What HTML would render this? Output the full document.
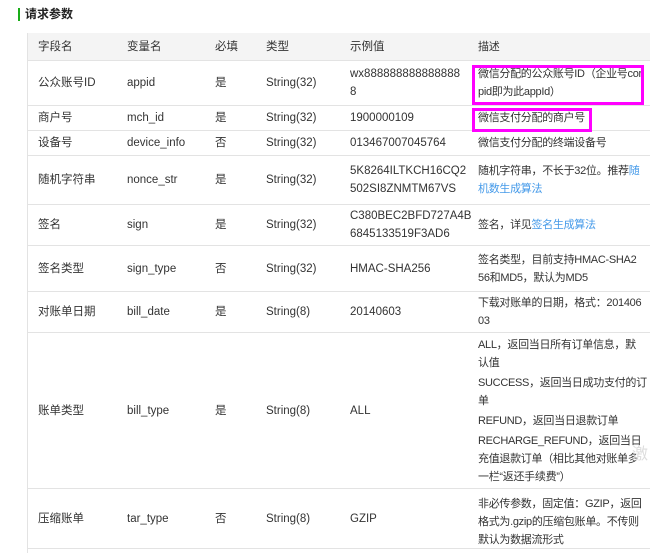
<!DOCTYPE html><html><head><meta charset="utf-8"><style>
body{margin:0;width:650px;height:535px;overflow:hidden;background:#fff;font-family:"Liberation Sans","Noto Sans CJK SC",sans-serif;font-size:11.5px;color:#333;position:relative}
.t{position:absolute;left:18px;top:8px;font-size:12px;font-weight:bold;color:#222;border-left:2px solid #1aad19;padding-left:5px;line-height:13px}
.tb{position:absolute;left:27px;top:33px;width:640px;height:520px;border-left:1px solid #e3e3e3}
.r{position:absolute;left:0;width:640px;border-bottom:1px solid #e3e3e3;box-sizing:border-box}
.c{position:absolute;top:0;bottom:0;display:flex;align-items:center;line-height:18px;white-space:nowrap}
.c1{left:10px}.c2{left:99px}.c3{left:187px}.c4{left:238px}.c5{left:322px}.c6{left:450px;font-size:11px;letter-spacing:-0.3px}
.h{background:#f4f4f4}
a{color:#459ae9;text-decoration:none}
.m{position:absolute;border:3px solid #f0f;box-sizing:border-box}
</style></head><body>
<div class="t">请求参数</div>
<div class="tb">
<div class="r h" style="top:0;height:28px"><div class="c c1">字段名</div><div class="c c2">变量名</div><div class="c c3">必填</div><div class="c c4">类型</div><div class="c c5">示例值</div><div class="c c6">描述</div></div>
<div class="r" style="top:28px;height:45px"><div class="c c1">公众账号ID</div><div class="c c2">appid</div><div class="c c3">是</div><div class="c c4">String(32)</div><div class="c c5"><div>wx888888888888888<br>8</div></div><div class="c c6"><div>微信分配的公众账号ID（企业号cor<br>pid即为此appId）</div></div></div>
<div class="r" style="top:73px;height:25px"><div class="c c1">商户号</div><div class="c c2">mch_id</div><div class="c c3">是</div><div class="c c4">String(32)</div><div class="c c5">1900000109</div><div class="c c6">微信支付分配的商户号</div></div>
<div class="r" style="top:98px;height:25px"><div class="c c1">设备号</div><div class="c c2">device_info</div><div class="c c3">否</div><div class="c c4">String(32)</div><div class="c c5">013467007045764</div><div class="c c6">微信支付分配的终端设备号</div></div>
<div class="r" style="top:123px;height:49px"><div class="c c1">随机字符串</div><div class="c c2">nonce_str</div><div class="c c3">是</div><div class="c c4">String(32)</div><div class="c c5"><div>5K8264ILTKCH16CQ2<br>502SI8ZNMTM67VS</div></div><div class="c c6"><div>随机字符串，不长于32位。推荐<a>随</a><br><a>机数生成算法</a></div></div></div>
<div class="r" style="top:172px;height:41px"><div class="c c1">签名</div><div class="c c2">sign</div><div class="c c3">是</div><div class="c c4">String(32)</div><div class="c c5"><div>C380BEC2BFD727A4B<br>6845133519F3AD6</div></div><div class="c c6"><span>签名，详见<a>签名生成算法</a></span></div></div>
<div class="r" style="top:213px;height:46px"><div class="c c1">签名类型</div><div class="c c2">sign_type</div><div class="c c3">否</div><div class="c c4">String(32)</div><div class="c c5">HMAC-SHA256</div><div class="c c6"><div>签名类型，目前支持HMAC-SHA2<br>56和MD5，默认为MD5</div></div></div>
<div class="r" style="top:259px;height:41px"><div class="c c1">对账单日期</div><div class="c c2">bill_date</div><div class="c c3">是</div><div class="c c4">String(8)</div><div class="c c5">20140603</div><div class="c c6"><div>下载对账单的日期，格式：201406<br>03</div></div></div>
<div class="r" style="top:300px;height:156px"><div class="c c1">账单类型</div><div class="c c2">bill_type</div><div class="c c3">是</div><div class="c c4">String(8)</div><div class="c c5">ALL</div><div class="c c6"><div>ALL，返回当日所有订单信息，默<br>认值<div style="height:2px"></div>SUCCESS，返回当日成功支付的订<br>单<div style="height:2px"></div>REFUND，返回当日退款订单<div style="height:2px"></div>RECHARGE_REFUND，返回当日<br>充值退款订单（相比其他对账单多<br>一栏“返还手续费”）</div></div></div>
<div class="r" style="top:456px;height:60px"><div class="c c1">压缩账单</div><div class="c c2">tar_type</div><div class="c c3">否</div><div class="c c4">String(8)</div><div class="c c5">GZIP</div><div class="c c6" style="align-items:flex-start;padding-top:6px"><div>非必传参数，固定值：GZIP，返回<br>格式为.gzip的压缩包账单。不传则<br>默认为数据流形式</div></div></div>
</div>
<div class="m" style="left:472px;top:65px;width:172px;height:40px"></div>
<div class="m" style="left:472px;top:108px;width:120px;height:24px"></div>
<div style="position:absolute;left:632px;top:440px;color:#ddd;font-size:16px">激</div>
</body></html>
